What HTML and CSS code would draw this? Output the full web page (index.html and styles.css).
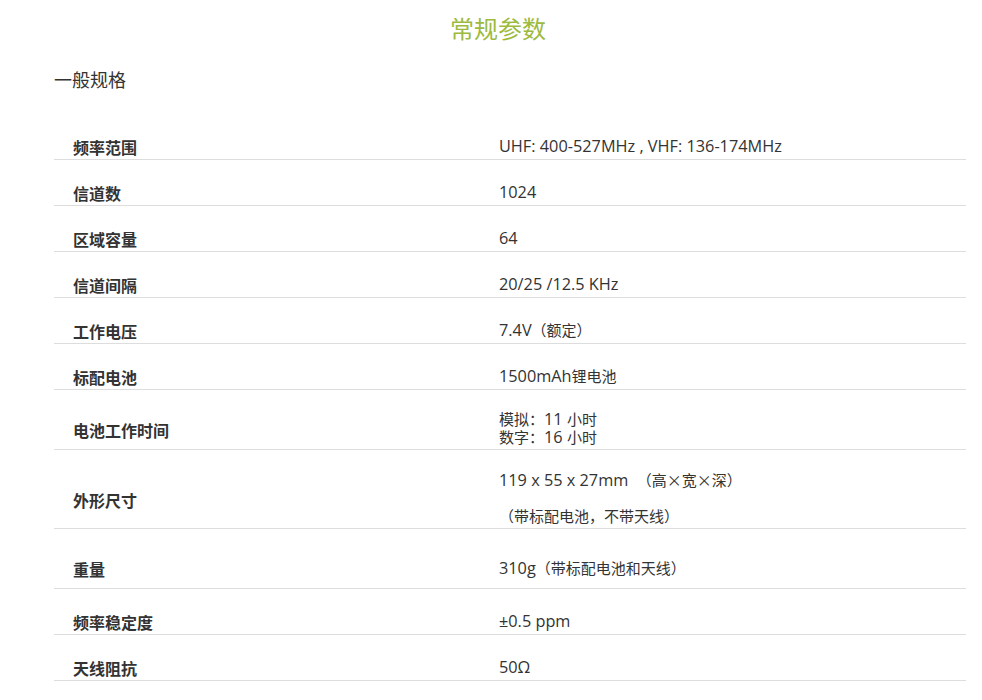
FILE: index.html
```html
<!DOCTYPE html>
<html lang="zh">
<head>
<meta charset="utf-8">
<link rel="stylesheet" href="styles.css">
</head>
<body>
<div class="page">
  <h1 class="title">常规参数</h1>
  <h2 class="section">一般规格</h2>
  <div class="specs">
    <div class="row"><div class="label">频率范围</div><div class="value">UHF: 400-527MHz , VHF: 136-174MHz</div></div>
    <div class="row"><div class="label">信道数</div><div class="value">1024</div></div>
    <div class="row"><div class="label">区域容量</div><div class="value">64</div></div>
    <div class="row"><div class="label">信道间隔</div><div class="value">20/25 /12.5 KHz</div></div>
    <div class="row"><div class="label">工作电压</div><div class="value">7.4V<span class="zh">（额定）</span></div></div>
    <div class="row"><div class="label">标配电池</div><div class="value">1500mAh<span class="zh">锂电池</span></div></div>
    <div class="row pair"><div class="label">电池工作时间</div><div class="value"><span class="zh">模拟：</span>11 <span class="zh">小时</span><br><span class="zh">数字：</span>16 <span class="zh">小时</span></div></div>
    <div class="row"><div class="label">外形尺寸</div><div class="value">119 x 55 x 27mm &nbsp;<span class="zh">（高×宽×深）</span><br><br><span class="zh">（带标配电池，不带天线）</span></div></div>
    <div class="row tall"><div class="label">重量</div><div class="value">310g<span class="zh">（带标配电池和天线）</span></div></div>
    <div class="row"><div class="label">频率稳定度</div><div class="value">±0.5 ppm</div></div>
    <div class="row"><div class="label">天线阻抗</div><div class="value">50Ω</div></div>
  </div>
</div>
</body>
</html>
```

FILE: styles.css
```css
html, body {
  margin: 0;
  padding: 0;
  background: #fff;
}
body {
  font-family: "Open Sans", "Noto Sans CJK SC", sans-serif;
  color: #333;
}
.page {
  width: 912px;
  margin: 0 0 0 54px;
  padding-top: 12px;
}
.title {
  margin: 0;
  padding-right: 24px;
  text-align: center;
  font-family: "Noto Sans CJK SC", sans-serif;
  font-weight: 400;
  font-size: 24px;
  line-height: 32px;
  color: #9cba3c;
}
.section {
  margin: 22px 0 0 0;
  font-family: "Noto Sans CJK SC", sans-serif;
  font-weight: 400;
  font-size: 18px;
  line-height: 26px;
  color: #333;
}
.specs {
  margin-top: 22px;
}
.row {
  display: grid;
  grid-template-columns: 426px 1fr;
  align-items: center;
  padding-top: 21px;
  padding-bottom: 3px;
  border-bottom: 1px solid #dddddd;
}
.row.pair {
  padding-top: 20px;
}
.row.tall {
  min-height: 35px;
}
.label {
  padding-left: 19px;
  font-family: "Noto Sans CJK SC", sans-serif;
  font-weight: 700;
  font-size: 16px;
  line-height: 21px;
  color: #333;
  position: relative;
  top: 2px;
}
.value {
  padding-left: 19px;
  font-family: "Open Sans", "Noto Sans CJK SC", sans-serif;
  font-size: 16.3px;
  line-height: 18px;
  color: #333;
}
.zh {
  font-family: "Noto Sans CJK SC", sans-serif;
  font-size: 15px;
  line-height: 0;
}
```
